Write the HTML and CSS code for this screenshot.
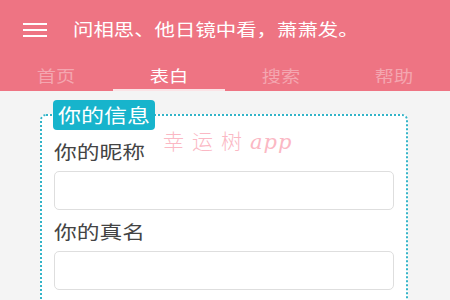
FILE: index.html
```html
<!DOCTYPE html>
<html lang="zh">
<head>
<meta charset="utf-8">
<link rel="stylesheet" href="styles.css">
</head>
<body>
<div class="page">
  <header class="header">
    <div class="topbar">
      <svg class="menu" width="24" height="14" viewBox="0 0 24 14">
        <rect x="0" y="0" width="24" height="2" fill="#fff"/>
        <rect x="0" y="6" width="24" height="2" fill="#fff"/>
        <rect x="0" y="12" width="24" height="2" fill="#fff"/>
      </svg>
      <div class="title"><span class="wide">问相思、他日镜中看，萧萧发。</span></div>
    </div>
    <nav class="tabs">
      <div class="tab"><span class="wide mid">首页</span></div>
      <div class="tab active"><span class="wide mid">表白</span></div>
      <div class="tab"><span class="wide mid">搜索</span></div>
      <div class="tab"><span class="wide mid">帮助</span></div>
    </nav>
  </header>
  <main class="content">
    <fieldset class="card">
      <legend class="badge"><span class="wide">你的信息</span></legend>
      <div class="label"><span class="wide">你的昵称</span></div>
      <input class="field" type="text">
      <div class="label second"><span class="wide">你的真名</span></div>
      <input class="field" type="text">
    </fieldset>
    <div class="watermark">幸运树<span class="wm-latin">app</span></div>
  </main>
</div>
</body>
</html>
```

FILE: styles.css
```css
html, body {
  margin: 0;
  padding: 0;
}
body {
  background: #f4f4f4;
  font-family: "Noto Sans CJK SC", "Noto Sans", sans-serif;
  width: 450px;
  height: 300px;
  overflow: hidden;
}
.page {
  position: relative;
}
.wide {
  display: inline-block;
  transform: scaleX(1.2);
  transform-origin: left center;
  white-space: nowrap;
}
.wide.mid {
  transform-origin: center center;
}
.header {
  background: #ee7483;
  height: 91px;
  display: flex;
  flex-direction: column;
}
.topbar {
  height: 58px;
  display: flex;
  align-items: center;
  padding-left: 23px;
}
.menu {
  display: block;
  margin-top: 1px;
}
.title {
  margin-left: 26px;
  color: #fff;
  font-size: 17px;
  line-height: 24px;
}
.tabs {
  display: flex;
  height: 33px;
}
.tab {
  flex: 1;
  display: flex;
  align-items: center;
  justify-content: center;
  color: #f4a6b0;
  font-size: 16px;
  border-bottom: 2px solid transparent;
  padding-top: 2px;
}
.tab.active {
  color: #fff;
  border-bottom-color: #fbe3e6;
}
.content {
  padding-top: 9px;
}
.card {
  margin: 0 42px 0 40px;
  border: 2px dotted #33b4c8;
  border-radius: 6px;
  padding: 8px 12px 20px;
  background: #fff;
  min-width: 0;
}
.badge {
  margin-left: -1px;
  padding: 0 0 0 5px;
  width: 102px;
  height: 30px;
  box-sizing: border-box;
  background: #17b4cc;
  color: #fff;
  border-radius: 4px;
  font-size: 19.5px;
  line-height: 30px;
}
.badge .wide {
  transform: scaleX(1.18);
}
.label {
  font-size: 18.5px;
  line-height: 26px;
  color: #444;
  margin-bottom: 7px;
}
.label .wide {
  transform: scaleX(1.23);
}
.label.second {
  margin-top: 8px;
}
.field {
  display: block;
  box-sizing: border-box;
  width: 100%;
  height: 39px;
  margin: 0;
  border: 1.5px solid #dedede;
  border-radius: 5px;
  background: #fff;
  outline: none;
}
.watermark {
  position: absolute;
  left: 163px;
  top: 127px;
  color: #fbb8c4;
  font-size: 21px;
  letter-spacing: 8px;
  line-height: 26px;
  font-weight: 300;
}
.wm-latin {
  font-family: "DejaVu Serif", serif;
  font-style: italic;
  letter-spacing: 1px;
  font-size: 21px;
}
```
